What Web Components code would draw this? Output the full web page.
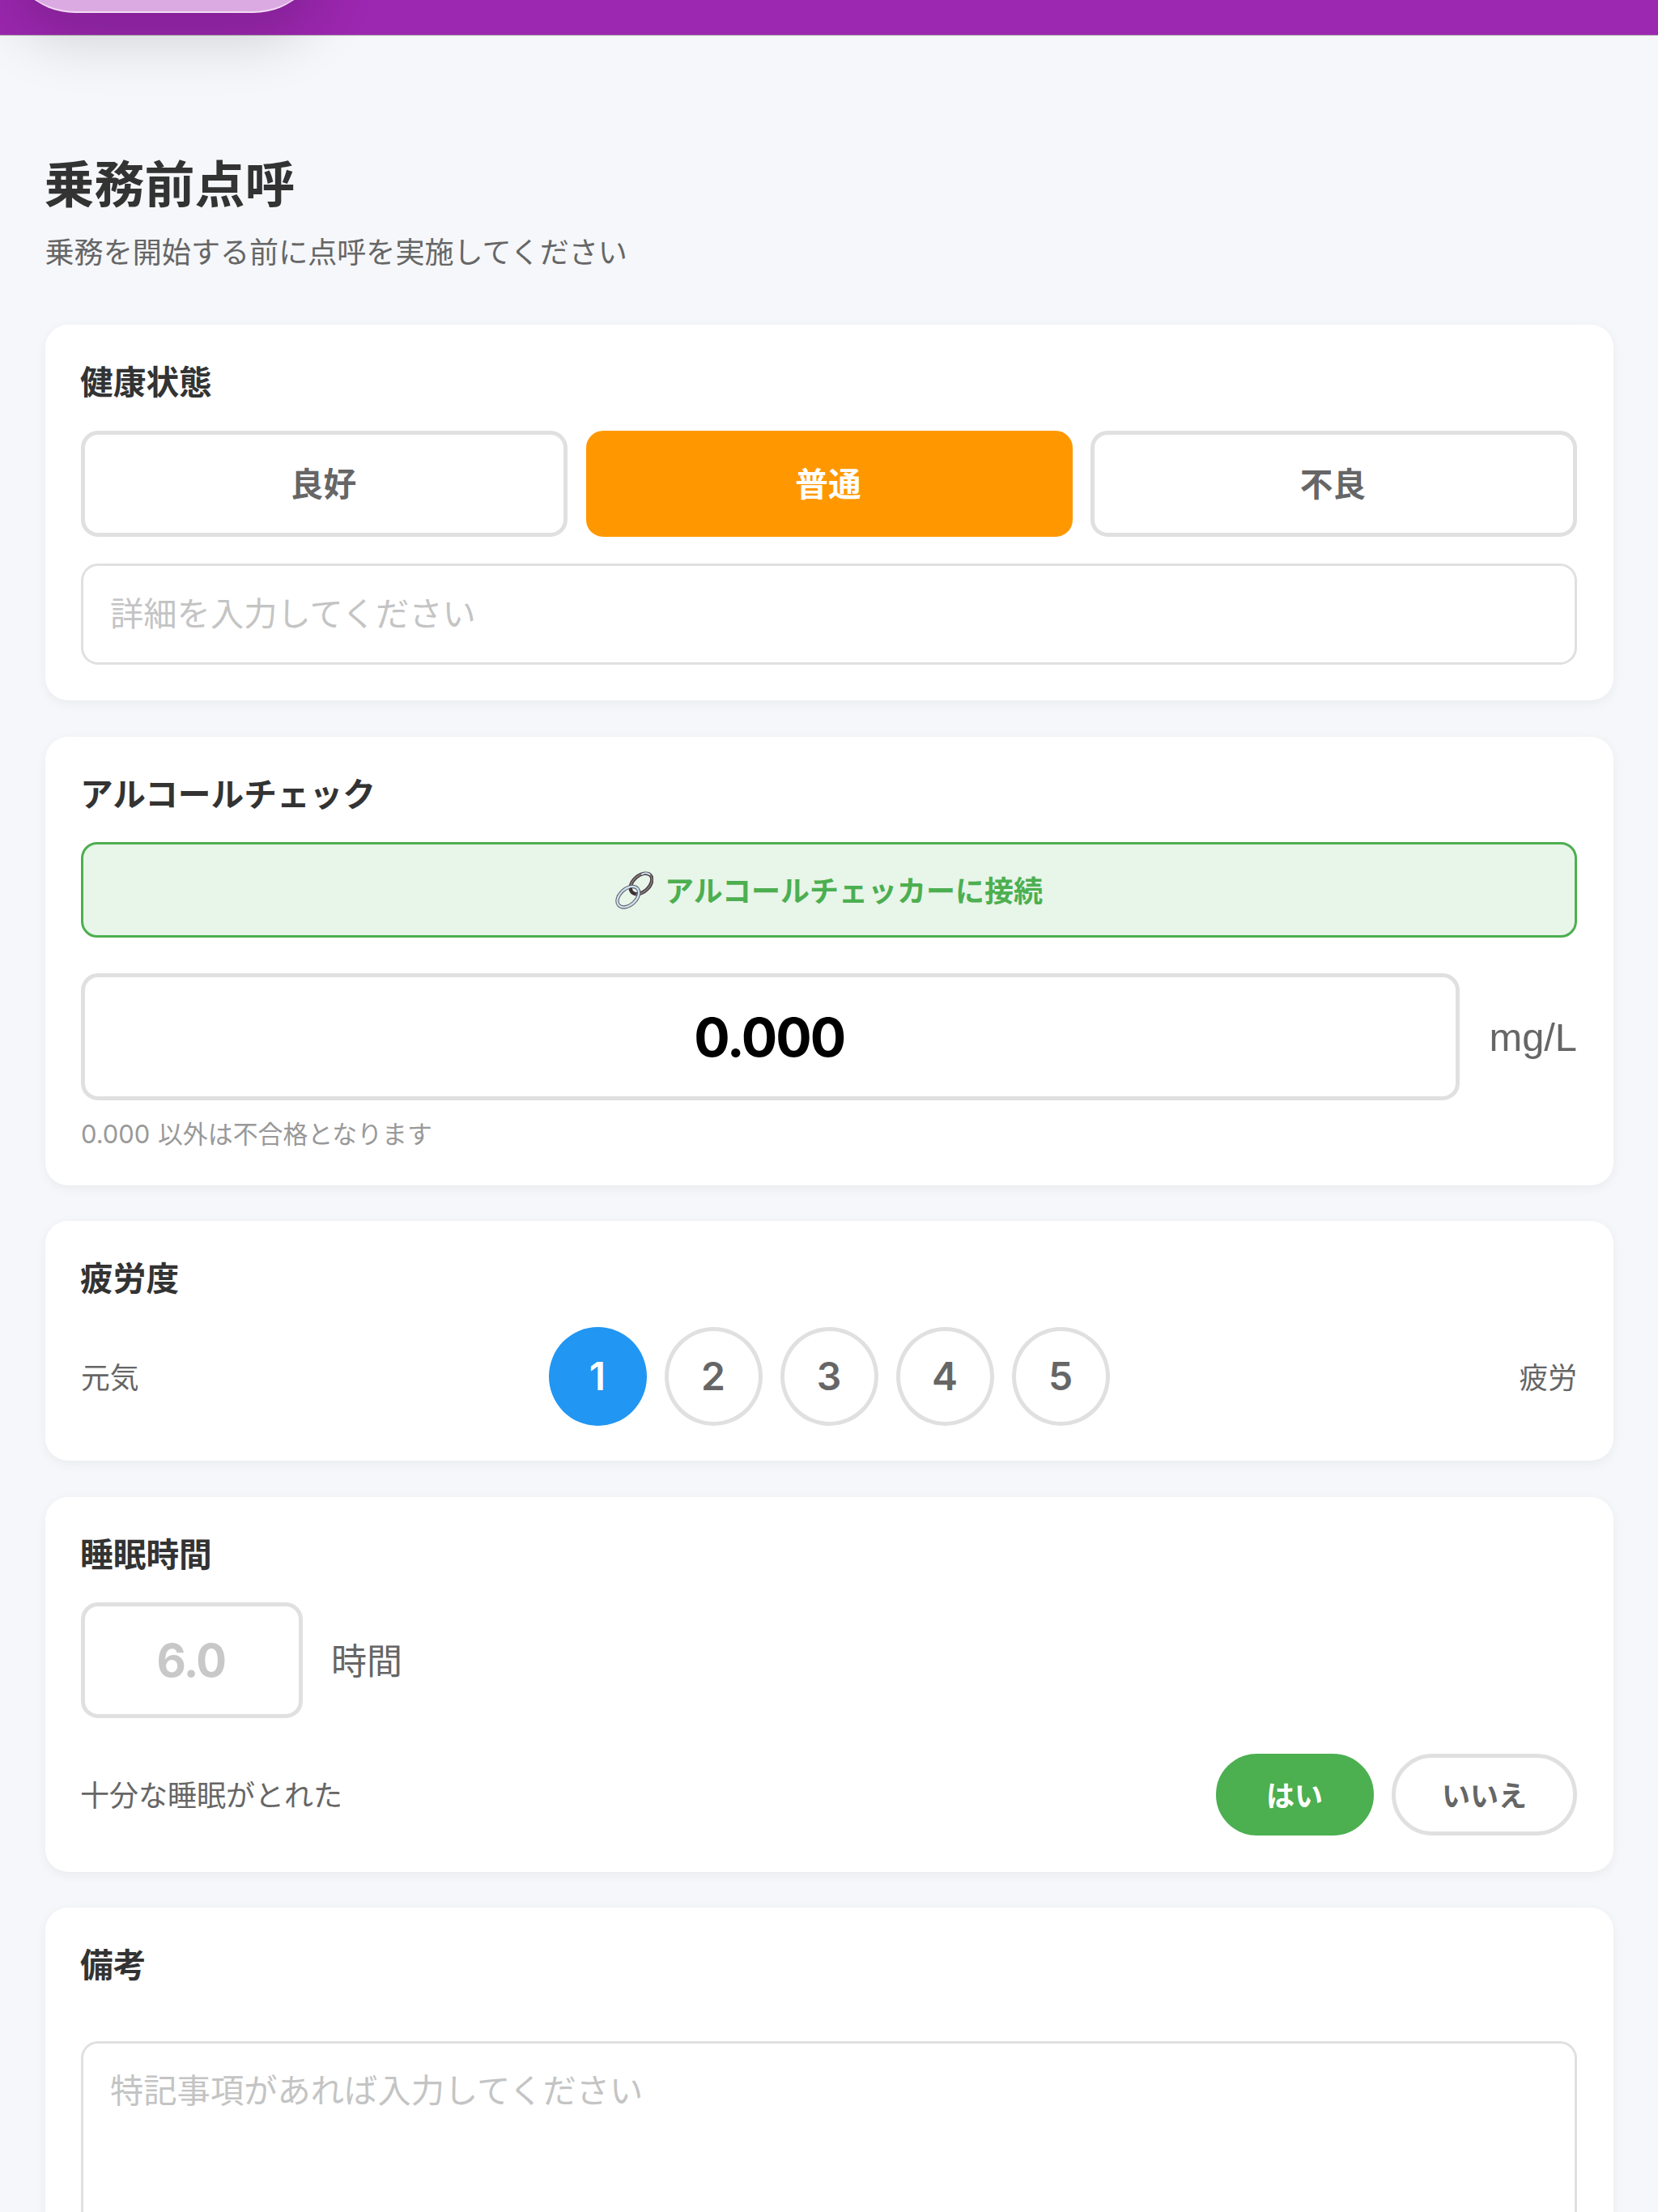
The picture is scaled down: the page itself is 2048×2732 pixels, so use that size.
<!DOCTYPE html>
<html lang="ja">
<head>
<meta charset="utf-8">
<title>乗務前点呼</title>
<style>
  html, body { margin: 0; background: #f5f7fa; }
  body { font-family: Inter, "Noto Sans CJK JP", sans-serif; overflow: hidden; height: 2732px; }
</style>
</head>
<body>
<app-header></app-header>
<roll-call-page></roll-call-page>

<script>
const FONT = `Inter, "Noto Sans CJK JP", sans-serif`;
const TEXT_FONT = `"Liberation Sans", "Noto Sans CJK JP", sans-serif`;

class AppHeader extends HTMLElement {
  constructor() {
    super();
    this.attachShadow({ mode: "open" });
    this.shadowRoot.innerHTML = `
      <style>
        :host {
          display: flex;
          align-items: flex-end;
          box-sizing: border-box;
          height: 44px;
          background: #9c27b0;
          border-bottom: 1px solid #a9a2ac;
        }
        .tab {
          flex: none;
          width: 394px;
          height: 175px;
          margin: 0 0 27px 6px;
          box-sizing: border-box;
          background: #dcaae2;
          border-bottom: 2.5px solid #f1dcf4;
          border-radius: 87px;
          box-shadow: 0 35px 70px rgba(0, 0, 0, 0.15);
        }
      </style>
      <div class="tab"></div>
    `;
  }
}
customElements.define("app-header", AppHeader);

class PageHeading extends HTMLElement {
  constructor() {
    super();
    this.attachShadow({ mode: "open" });
    this.shadowRoot.innerHTML = `
      <style>
        :host { display: block; padding: 146.5px 0 64px; font-family: ${FONT}; }
        h1 { margin: 0 0 20.5px -1px; font-size: 62px; line-height: 76px; font-weight: 700; color: #333; }
        p { margin: 0; font-size: 36.1px; line-height: 50px; color: #666; }
      </style>
      <h1>${this.getAttribute("heading")}</h1>
      <p><slot></slot></p>
    `;
  }
}
customElements.define("page-heading", PageHeading);

class FormCard extends HTMLElement {
  constructor() {
    super();
    this.attachShadow({ mode: "open" });
    this.shadowRoot.innerHTML = `
      <style>
        :host {
          display: block;
          box-sizing: border-box;
          padding: 44.5px;
          background: #fff;
          border-radius: 28px;
          box-shadow: 0 3.5px 14px rgba(0, 0, 0, 0.05);
          font-family: ${FONT};
        }
        h2 { margin: 0 0 33.5px -1px; padding-top: 2.5px; font-size: 40.7px; line-height: 50px; font-weight: 700; color: #333; }
      </style>
      <h2>${this.getAttribute("heading")}</h2>
      <slot></slot>
    `;
  }
}
customElements.define("form-card", FormCard);

class OptionButton extends HTMLElement {
  constructor() {
    super();
    this.attachShadow({ mode: "open" });
    this.shadowRoot.innerHTML = `
      <style>
        :host {
          display: flex;
          align-items: center;
          justify-content: center;
          box-sizing: border-box;
          height: 131px;
          padding: 0 2px 3px 0;
          background: #fff;
          border: 5px solid #e0e0e0;
          border-radius: 21px;
          font-size: 40.7px;
          font-weight: 700;
          color: #666;
        }
        :host([selected]) {
          background: var(--on, #4caf50);
          border-color: var(--on, #4caf50);
          color: #fff;
        }
        :host([shape="circle"]) {
          width: 121px;
          height: 122px;
          padding: 0;
          border-radius: 50%;
          font-size: 48px;
          font-weight: 600;
        }
        :host([shape="pill"]) {
          height: 101px;
          padding: 0 0 3px;
          border-radius: 51px;
          font-size: 35px;
        }
      </style>
      <slot></slot>
    `;
  }
}
customElements.define("option-button", OptionButton);

class TextField extends HTMLElement {
  constructor() {
    super();
    this.attachShadow({ mode: "open" });
    this.shadowRoot.innerHTML = `
      <style>
        :host {
          display: flex;
          align-items: center;
          box-sizing: border-box;
          height: 125px;
          padding: 0 33px;
          background: #fff;
          border: 3px solid #e0e0e0;
          border-radius: 21px;
          font-size: 41.3px;
          line-height: 50px;
          color: #c4c4c4;
        }
        :host([multiline]) {
          align-items: flex-start;
          height: 300px;
          padding-top: 33px;
        }
      </style>
      <slot></slot>
    `;
  }
}
customElements.define("text-field", TextField);

class LinkIcon extends HTMLElement {
  constructor() {
    super();
    this.attachShadow({ mode: "open" });
    this.shadowRoot.innerHTML = `
      <style>
        :host { display: block; width: 47px; height: 47px; }
        svg { display: block; width: 100%; height: 100%; }
      </style>
      <svg viewBox="0 0 47 47" fill="none">
        <g transform="rotate(-42 32 15.5)">
          <ellipse cx="32" cy="15.5" rx="15.5" ry="10" stroke="#4d4347" stroke-width="4.4"/>
          <ellipse cx="32" cy="15.5" rx="15.5" ry="10" stroke="#8f8386" stroke-width="1.2"/>
        </g>
        <path d="M33 3.6c3-1.7 7-1.6 9.4.4" stroke="#cfe4f2" stroke-width="2" stroke-linecap="round"/>
        <g transform="rotate(-42 15.8 31.7)">
          <ellipse cx="15.8" cy="31.7" rx="15.5" ry="10" stroke="#5f646d" stroke-width="4.4"/>
          <ellipse cx="15.8" cy="31.7" rx="15.5" ry="10" stroke="#cfe3f1" stroke-width="2.2"/>
        </g>
        <g transform="rotate(-42 32 15.5)">
          <path d="M18 12Q15.5 15.5 18 19" stroke="#3d3034" stroke-width="3.6" stroke-linecap="round"/>
        </g>
      </svg>
    `;
  }
}
customElements.define("link-icon", LinkIcon);

class ConnectButton extends HTMLElement {
  constructor() {
    super();
    this.attachShadow({ mode: "open" });
    this.shadowRoot.innerHTML = `
      <style>
        :host {
          display: flex;
          align-items: center;
          justify-content: center;
          gap: 14px;
          box-sizing: border-box;
          height: 118px;
          background: #e8f5e9;
          border: 3px solid #4caf50;
          border-radius: 20px;
          font-size: 36px;
          font-weight: 700;
          color: #4caf50;
        }
        span { padding-bottom: 3px; }
      </style>
      <link-icon></link-icon>
      <span><slot></slot></span>
    `;
  }
}
customElements.define("connect-button", ConnectButton);

class ValueBox extends HTMLElement {
  constructor() {
    super();
    this.attachShadow({ mode: "open" });
    this.shadowRoot.innerHTML = `
      <style>
        :host {
          display: flex;
          align-items: center;
          justify-content: center;
          box-sizing: border-box;
          height: 157px;
          padding-right: 2px;
          background: #fff;
          border: 5px solid #e0e0e0;
          border-radius: 21px;
          font-size: 66px;
          font-weight: 700;
          letter-spacing: -2px;
          color: #000;
        }
        :host([muted]) {
          width: 274px;
          height: 143px;
          font-size: 56px;
          letter-spacing: -1.5px;
          color: #c8c8c8;
        }
      </style>
      <slot></slot>
    `;
  }
}
customElements.define("value-box", ValueBox);

class HealthCard extends HTMLElement {
  constructor() {
    super();
    this.attachShadow({ mode: "open" });
    this.shadowRoot.innerHTML = `
      <style>
        :host { display: block; }
        .choices { display: grid; grid-template-columns: repeat(3, 1fr); gap: 22.5px; margin-bottom: 33px; }
        option-button { --on: #ff9800; }
      </style>
      <form-card heading="健康状態">
        <div class="choices">
          <option-button>良好</option-button>
          <option-button selected>普通</option-button>
          <option-button>不良</option-button>
        </div>
        <text-field>詳細を入力してください</text-field>
      </form-card>
    `;
  }
}
customElements.define("health-card", HealthCard);

class AlcoholCard extends HTMLElement {
  constructor() {
    super();
    this.attachShadow({ mode: "open" });
    this.shadowRoot.innerHTML = `
      <style>
        :host { display: block; }
        .reading { display: flex; align-items: center; gap: 37px; margin-top: 44px; }
        value-box { flex: 1; }
        .unit { font-family: ${TEXT_FONT}; font-size: 48.8px; color: #666; }
        .hint { margin: 21px 0 -3px; font-size: 30.9px; word-spacing: 1px; line-height: 42px; color: #999; }
      </style>
      <form-card heading="アルコールチェック">
        <connect-button>アルコールチェッカーに接続</connect-button>
        <div class="reading">
          <value-box>0.000</value-box>
          <span class="unit">mg/L</span>
        </div>
        <div class="hint">0.000 以外は不合格となります</div>
      </form-card>
    `;
  }
}
customElements.define("alcohol-card", AlcoholCard);

class FatigueCard extends HTMLElement {
  constructor() {
    super();
    this.attachShadow({ mode: "open" });
    this.shadowRoot.innerHTML = `
      <style>
        :host { display: block; }
        .scale { display: flex; align-items: center; justify-content: space-between; margin-bottom: -1px; }
        .end { width: 72px; padding-bottom: 2px; font-size: 35.8px; color: #666; }
        .end:last-child { text-align: right; }
        .dots { display: flex; gap: 22px; --on: #2196f3; }
      </style>
      <form-card heading="疲労度">
        <div class="scale">
          <span class="end">元気</span>
          <div class="dots">
            <option-button shape="circle" selected>1</option-button>
            <option-button shape="circle">2</option-button>
            <option-button shape="circle">3</option-button>
            <option-button shape="circle">4</option-button>
            <option-button shape="circle">5</option-button>
          </div>
          <span class="end">疲労</span>
        </div>
      </form-card>
    `;
  }
}
customElements.define("fatigue-card", FatigueCard);

class SleepCard extends HTMLElement {
  constructor() {
    super();
    this.attachShadow({ mode: "open" });
    this.shadowRoot.innerHTML = `
      <style>
        :host { display: block; }
        .hours { display: flex; align-items: center; gap: 35px; margin-bottom: 44px; }
        .unit { padding-bottom: 3px; font-size: 44px; color: #666; }
        .enough { display: flex; align-items: center; justify-content: space-between; }
        .label { margin-left: -1px; padding-bottom: 3px; font-size: 36px; color: #666; }
        .answers { display: flex; gap: 22.5px; }
        .yes { width: 195px; }
        .no { width: 229px; }
      </style>
      <form-card heading="睡眠時間">
        <div class="hours">
          <value-box muted>6.0</value-box>
          <span class="unit">時間</span>
        </div>
        <div class="enough">
          <span class="label">十分な睡眠がとれた</span>
          <div class="answers">
            <option-button class="yes" shape="pill" selected>はい</option-button>
            <option-button class="no" shape="pill">いいえ</option-button>
          </div>
        </div>
      </form-card>
    `;
  }
}
customElements.define("sleep-card", SleepCard);

class NotesCard extends HTMLElement {
  constructor() {
    super();
    this.attachShadow({ mode: "open" });
    this.shadowRoot.innerHTML = `
      <style>
        :host { display: block; }
        text-field { margin-top: 68px; }
      </style>
      <form-card heading="備考">
        <text-field multiline>特記事項があれば入力してください</text-field>
      </form-card>
    `;
  }
}
customElements.define("notes-card", NotesCard);

class RollCallPage extends HTMLElement {
  constructor() {
    super();
    this.attachShadow({ mode: "open" });
    this.shadowRoot.innerHTML = `
      <style>
        :host { display: block; padding: 0 55.5px; }
        .cards { display: flex; flex-direction: column; gap: 44.5px; }
      </style>
      <page-heading heading="乗務前点呼">乗務を開始する前に点呼を実施してください</page-heading>
      <div class="cards">
        <health-card></health-card>
        <alcohol-card></alcohol-card>
        <fatigue-card></fatigue-card>
        <sleep-card></sleep-card>
        <notes-card></notes-card>
      </div>
    `;
  }
}
customElements.define("roll-call-page", RollCallPage);
</script>
</body>
</html>
